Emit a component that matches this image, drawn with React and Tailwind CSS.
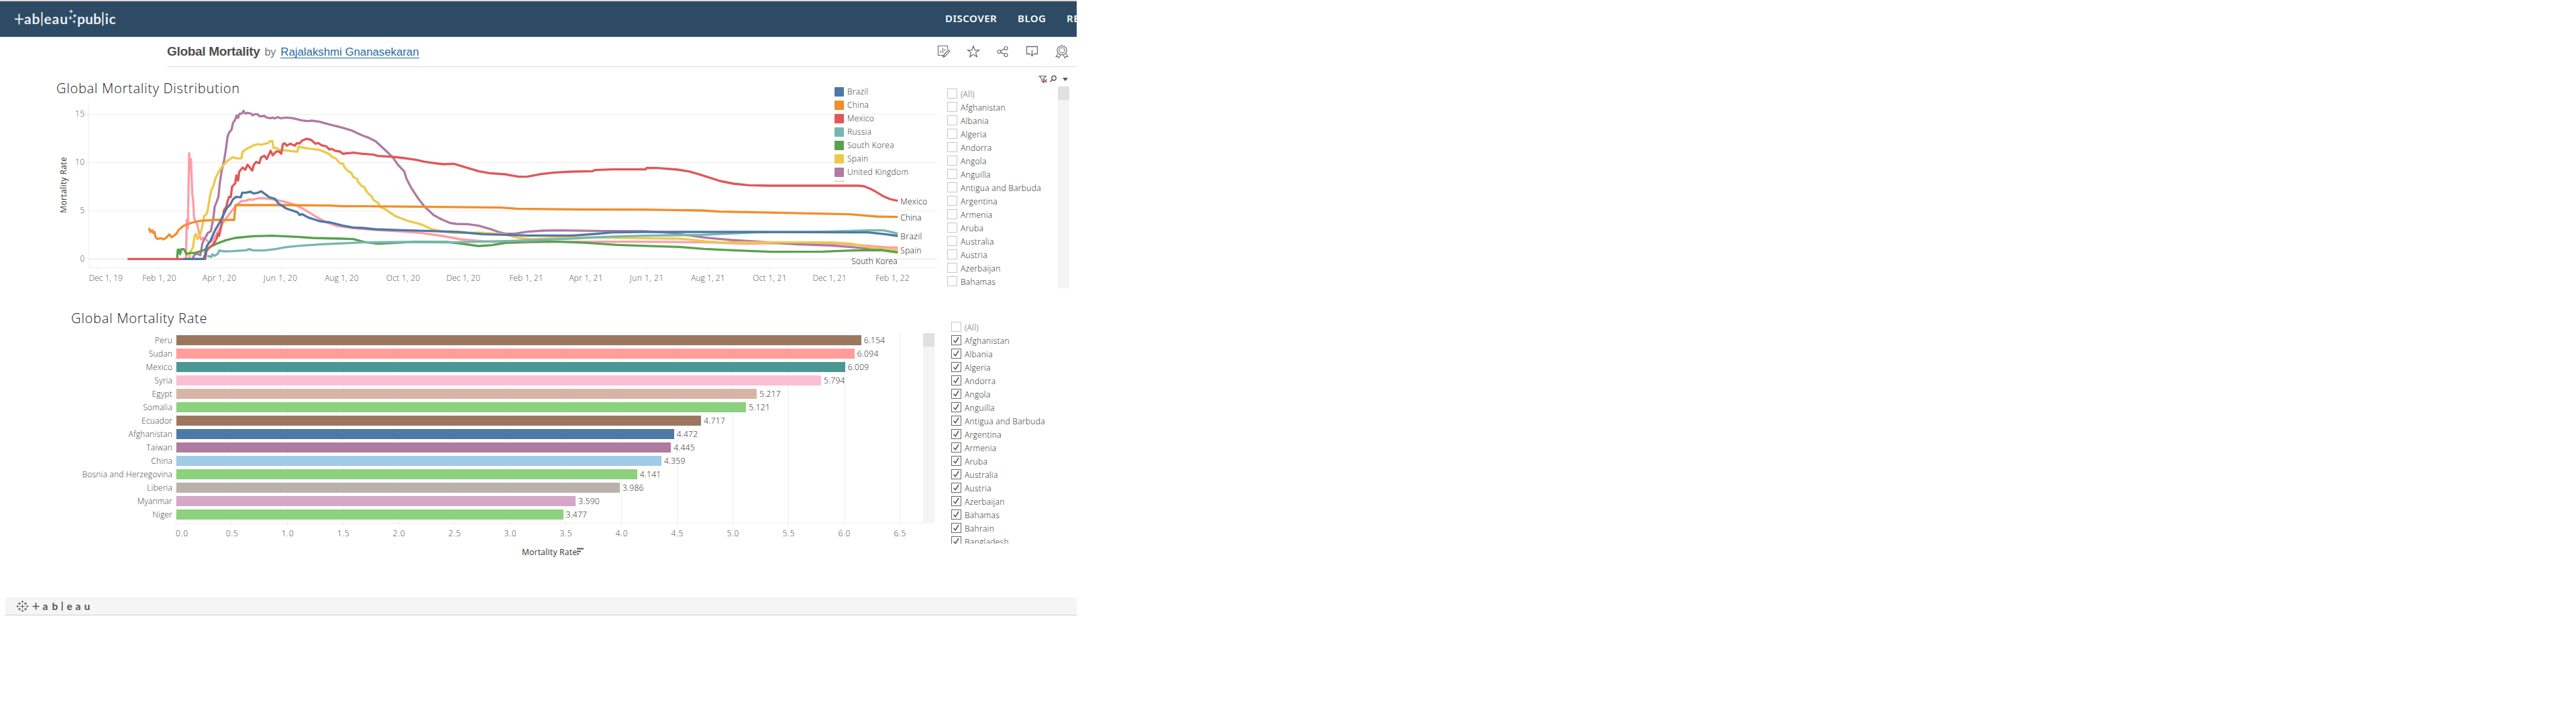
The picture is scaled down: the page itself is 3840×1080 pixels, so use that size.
import React from "react";

const SERIES = [
  { name: "Italy", color: "#ff9da7", pts: "652,859 655,684 660,722 666,385 670,455 674,412 680,570 684,600 688,675 695,690 703,708 710,742 718,772 725,765 745,775 755,785 768,780 790,745 815,700 840,665 875,620 900,600 920,598 935,592 950,594 970,588 1000,587 1040,592 1090,602 1140,617 1180,637 1230,668 1280,695 1330,712 1400,721 1500,729 1620,736 1700,742 1800,756 1880,771 1980,780 2120,786 2300,782 2700,782 2980,784 3140,790 3400,788 3600,792 3700,800 3780,807 3835,808" },
  { name: "United Kingdom", color: "#b07aa1", pts: "680,859 690,840 700,835 716,842 725,790 733,770 740,760 750,742 763,735 775,670 780,625 790,600 797,580 803,520 812,460 822,420 830,370 838,310 845,292 855,282 862,250 872,235 878,217 885,228 890,210 902,208 909,196 918,209 925,205 942,208 950,216 958,211 972,211 980,220 1003,219 1012,226 1030,229 1040,226 1048,230 1062,224 1075,229 1100,226 1130,229 1170,239 1195,242 1215,240 1250,245 1290,256 1350,271 1390,283 1440,306 1470,317 1500,332 1530,360 1560,388 1578,406 1600,438 1628,467 1638,500 1660,542 1690,588 1720,626 1760,663 1795,682 1830,697 1860,702 1910,703 1960,710 2010,724 2050,738 2080,746 2120,746 2180,737 2250,732 2330,731 2520,734 2700,735 2810,741 2890,752 2970,763 3090,774 3220,782 3380,793 3540,799 3630,806 3710,814 3780,820 3835,820" },
  { name: "Spain", color: "#edc948", pts: "665,859 672,825 683,808 690,755 697,747 703,770 712,755 720,735 727,700 733,665 743,660 750,635 757,590 765,550 775,530 785,495 795,475 810,450 825,432 840,418 860,404 885,410 900,408 905,378 930,362 955,350 975,345 985,348 1020,340 1028,331 1038,331 1043,362 1050,361 1070,370 1150,379 1155,357 1200,365 1250,371 1275,382 1290,388 1305,402 1320,408 1340,430 1355,434 1360,448 1380,468 1390,472 1400,492 1417,500 1422,515 1438,533 1450,537 1455,550 1470,570 1480,575 1490,595 1510,607 1520,625 1540,635 1570,655 1590,668 1640,687 1700,703 1750,725 1800,737 1860,743 1960,741 2080,749 2140,765 2200,770 2300,765 2400,762 2520,763 2760,767 2850,768 2910,772 2970,780 3050,785 3300,784 3540,785 3630,791 3700,805 3770,815 3835,820" },
  { name: "South Korea", color: "#59a14f", pts: "612,857 615,817 622,817 625,838 632,815 642,815 655,838 665,832 690,832 730,820 760,805 790,790 830,775 870,765 950,757 1040,755 1150,760 1220,765 1350,768 1400,770 1450,783 1510,791 1600,786 1670,782 1820,783 1880,790 1960,801 2020,797 2080,787 2200,781 2320,782 2450,787 2580,796 2760,802 2860,805 2970,814 3100,820 3270,827 3500,826 3630,821 3760,819 3835,830" },
  { name: "Russia", color: "#76b7b2", pts: "748,845 765,850 770,838 780,845 795,835 800,821 820,825 860,824 920,820 935,815 950,820 1000,821 1050,815 1100,806 1160,800 1260,793 1440,785 1620,783 1820,785 1980,781 2150,777 2400,767 2520,760 2700,755 2960,751 3200,740 3500,737 3700,731 3770,731 3810,739 3835,746" },
  { name: "Mexico", color: "#e15759", pts: "390,859 738,859 743,825 750,815 760,805 772,795 782,780 790,765 795,745 800,755 808,720 815,680 822,640 832,625 838,600 845,580 852,582 858,535 872,520 877,485 885,508 890,468 905,450 917,460 927,437 948,463 955,438 965,425 980,430 987,405 1003,397 1013,412 1030,375 1040,395 1055,378 1068,378 1078,388 1085,345 1093,341 1103,352 1118,343 1138,352 1147,341 1160,342 1170,330 1190,321 1212,326 1230,343 1243,340 1258,350 1280,355 1293,369 1303,366 1320,375 1340,378 1355,389 1372,385 1382,386 1398,383 1440,388 1490,392 1510,398 1580,402 1630,408 1680,415 1720,424 1800,435 1850,433 1900,448 1960,466 2010,475 2080,480 2140,491 2180,490 2240,479 2300,472 2380,468 2470,466 2480,461 2560,458 2708,458 2712,451 2760,452 2850,459 2900,467 2940,478 2990,494 3040,510 3100,522 3170,529 3260,531 3660,531 3685,534 3715,546 3740,560 3770,578 3800,591 3835,599" },
  { name: "China", color: "#f28e2b", pts: "486,720 492,738 500,730 505,742 511,738 516,762 525,769 540,766 550,771 562,766 577,749 588,762 610,745 618,730 640,711 680,696 715,688 780,684 867,684 873,618 1100,618 1300,620 1350,623 1440,623 1700,625 2060,629 2130,634 2400,637 2700,638 2960,642 3040,647 3300,652 3480,656 3620,659 3740,669 3835,671" },
  { name: "Brazil", color: "#4e79a7", pts: "640,859 730,859 737,840 745,800 760,780 775,745 785,725 795,708 805,690 820,660 835,630 850,615 862,592 875,581 897,583 903,562 918,563 940,558 955,566 975,562 988,556 1005,568 1025,583 1050,590 1065,610 1100,633 1150,650 1160,662 1170,658 1200,674 1250,690 1300,696 1350,709 1400,718 1440,720 1500,726 1620,730 1720,733 1870,738 1980,748 2180,754 2380,754 2480,747 2560,740 2700,738 3200,738 3700,740 3780,748 3835,756" },
];

const DATE_TICKS = [
  ["Dec 1, 19", 254, 293], ["Feb 1, 20", 532, 532], ["Apr 1, 20", 799, 801], ["Jun 1, 20", 1075, 1074],
  ["Aug 1, 20", 1348, 1348], ["Oct 1, 20", 1622, 1623], ["Dec 1, 20", 1895, 1892], ["Feb 1, 21", 2173, 2173],
  ["Apr 1, 21", 2438, 2440], ["Jun 1, 21", 2713, 2712], ["Aug 1, 21", 2986, 2986], ["Oct 1, 21", 3260, 3262],
  ["Dec 1, 21", 3533, 3530], ["Feb 1, 22", 3811, 3811],
];
const MINOR_TICKS = [391, 661, 935, 1210, 1485, 1762, 2035, 2300, 2572, 2848, 3124, 3400, 3673, 3937];

const LEGEND = [
  ["Brazil", "#4e79a7"], ["China", "#f28e2b"], ["Mexico", "#e15759"], ["Russia", "#76b7b2"],
  ["South Korea", "#59a14f"], ["Spain", "#edc948"], ["United Kingdom", "#b07aa1"],
];

const COUNTRIES = [
  "(All)", "Afghanistan", "Albania", "Algeria", "Andorra", "Angola", "Anguilla", "Antigua and Barbuda",
  "Argentina", "Armenia", "Aruba", "Australia", "Austria", "Azerbaijan", "Bahamas", "Bahrain", "Bangladesh",
];

const BARS = [
  ["Peru", "6.154", "#9d7660"], ["Sudan", "6.094", "#ff9d9a"], ["Mexico", "6.009", "#499894"],
  ["Syria", "5.794", "#fabfd2"], ["Egypt", "5.217", "#d7b5a6"], ["Somalia", "5.121", "#8cd17d"],
  ["Ecuador", "4.717", "#9d7660"], ["Afghanistan", "4.472", "#4e79a7"], ["Taiwan", "4.445", "#b07aa1"],
  ["China", "4.359", "#a0cbe8"], ["Bosnia and Herzegovina", "4.141", "#8cd17d"], ["Liberia", "3.986", "#bab0ac"],
  ["Myanmar", "3.590", "#d4a6c8"], ["Niger", "3.477", "#8cd17d"],
];
const UNIT = 165.95;

function PublicLogo() {
  return (
    <svg width="164" height="40" viewBox="10 8.5 164 40" fill="#e9edf0" stroke="none" className="ml-[10px] font-['Lato'] text-[21px] font-bold">
      <g stroke="#e9edf0" strokeWidth="2" fill="none">
        <path d="M28.5 20v16M22 28h13M62.5 17.500v20.500M153.300 17.500v20.500" />
        <path strokeWidth="1.300" d="M106 14v5M103.500 16.500h5M105 23.500v5.500M102.300 26.300h5.500M111.500 20.500v5M109 23h5M110.500 29.500v4.500M108.300 31.800h4.500" />
      </g>
      <text x="36" y="35.800" textLength="23.500">ab</text>
      <text x="65.500" y="35.800" textLength="35.500">eau</text>
      <text x="115" y="35.800" textLength="36">pub</text>
      <text x="156.500" y="35.800" textLength="16">ic</text>
    </svg>
  );
}

function ActionIcons() {
  const cls = "fill-none stroke-[#6b6b6b]";
  return (
    <div className="mr-[11px] flex gap-[22px]">
      <svg className={cls} width="22" height="22" viewBox="0 0 22 22" strokeWidth="1.200">
        <path d="M10 16.500H2.500v-14h14v5M6.500 13V9.500M9.500 13V5.500M12.500 10V7.500" />
        <path d="M10.500 16.500l7-8 2.200 2-7.200 7.800-3 1zM10.700 16.500l2 1.700" />
      </svg>
      <svg className={cls} width="22" height="22" viewBox="0 0 22 22" strokeWidth="1.200">
        <path d="M11 2.800l2.300 6h6.200l-5 3.800 1.900 6.200L11 15.300l-5.400 3.500 1.900-6.200-5-3.800h6.200z" />
      </svg>
      <svg className={cls} width="22" height="22" viewBox="0 0 22 22" strokeWidth="1.200">
        <circle cx="5.500" cy="11" r="2.500" />
        <circle cx="15.500" cy="6" r="2.500" />
        <circle cx="15.500" cy="16" r="2.500" />
        <path d="M7.700 9.900l5.500-2.700M7.700 12.100l5.500 2.700" />
      </svg>
      <svg className={cls} width="22" height="22" viewBox="0 0 22 22" strokeWidth="1.300">
        <path d="M8.500 14.500h-6v-11h16v11h-6M10.500 8.500v8" />
        <path d="M8 15.500h5l-2.500 3z" fill="#6b6b6b" stroke="none" />
      </svg>
      <svg className={cls} width="22" height="22" viewBox="0 0 22 22" strokeWidth="1.100">
        <circle cx="11" cy="9" r="4" />
        <path d="M11 2l1.700 1 2-.2.900 1.700 1.800.9v2l1 1.600-1 1.700v2l-1.800.9-.9 1.700-2-.1-1.700 1-1.700-1-2 .1-.9-1.700-1.800-.9v-2l-1-1.700 1-1.600v-2l1.800-.9.900-1.700 2 .2z" />
        <path d="M5.200 13.500l-3 5 2.800-.3 1.500 2.300 3-5.500M16.800 13.500l3 5-2.800-.3-1.500 2.300-3-5.500" />
      </svg>
    </div>
  );
}

function FilterList({ items, checked }) {
  return (
    <ul className="flex flex-col">
      {items.map((name, i) => {
        const on = checked && i > 0;
        return (
          <li key={name} className="flex h-5 items-start gap-[5px]">
            <span className={"flex size-[15px] shrink-0 items-center justify-center border bg-white " + (on ? "border-[#666]" : "border-[#c6c6c6]")}>
              {on && (
                <svg width="11" height="11" viewBox="0 0 11 11" fill="none" stroke="#555" strokeWidth="1.600">
                  <path d="M1.500 5.800l2.800 3 4.700-7.800" />
                </svg>
              )}
            </span>
            <span className={"text-[12px] leading-[17px] font-light tracking-[0.320px] whitespace-nowrap " + (i ? "text-[#1f1f1f]" : "text-[#555]")}>{name}</span>
          </li>
        );
      })}
    </ul>
  );
}

function LineChart() {
  return (
    <svg width="1350" height="340" viewBox="0 0 4050 1020" className="block text-[36px] font-light">
      <g stroke="#efefef" strokeWidth="3" fill="none">
        <path d="M217.500 158V898.500H4010M217 211.500H4010M217 427.500H4010M217 643.500H4010" />
        <path d="M205 211.500h12M205 427.500h12M205 643.500h12M205 859.500h12" />
        {DATE_TICKS.map(([label, x]) => <path key={label} d={`M${x} 898v13`} />)}
        {MINOR_TICKS.map((x) => <path key={x} d={`M${x} 898v5`} />)}
      </g>
      <path d="M222 859.500H4010" stroke="#bdbdbd" strokeWidth="3" strokeDasharray="3 3" />
      <g fill="none" strokeWidth="10" strokeLinejoin="round">
        {SERIES.map((s) => <polyline key={s.name} points={s.pts} stroke={s.color} />)}
      </g>
      <g fill="#555" textAnchor="end">
        <text x="198" y="222" textLength="42">15</text>
        <text x="198" y="438" textLength="42">10</text>
        <text x="198" y="654">5</text>
        <text x="198" y="870">0</text>
      </g>
      <g fill="#555" textAnchor="middle">
        {DATE_TICKS.map(([label, , x]) => <text key={label} x={x} y="957" textLength="151">{label}</text>)}
      </g>
      <g fill="#111">
        <text x="3847" y="615" textLength="119">Mexico</text>
        <text x="3847" y="687" textLength="93">China</text>
        <text x="3847" y="771" textLength="96">Brazil</text>
        <text x="3847" y="834" textLength="93">Spain</text>
        <text x="3628" y="882" textLength="205">South Korea</text>
      </g>
      <text transform="translate(118 653) rotate(-90)" textLength="250" fill="#333" className="font-normal">Mortality Rate</text>
    </svg>
  );
}

function BarChart() {
  return (
    <div className="relative mt-[10px] w-[1376px]">
      <div className="absolute top-0 left-[262px] h-[289px] w-[1114px]">
        <svg width="1114" height="289" stroke="#efefef" fill="none">
          {Array.from({ length: 14 }, (_, i) => {
            const x = Math.round(i * UNIT / 2) + 0.5;
            return <path key={i} d={`M${x} 0V288`} />;
          })}
          <path d="M0 283.500H1114" />
        </svg>
      </div>
      <div className="relative flex flex-col gap-[5px] pt-[3px]">
        {BARS.map(([name, value, color]) => (
          <div key={name} className="flex h-[15px] items-center">
            <span className="w-[257px] text-right text-[12px] font-light tracking-[0.200px] text-[#444]">{name}</span>
            <span className="ml-[5.500px] h-[15px]" style={{ width: value * UNIT, backgroundColor: color }} />
            <span className="ml-1 text-[12px] font-light tracking-[0.300px] text-[#222]">{value}</span>
          </div>
        ))}
      </div>
      <svg width="1376" height="60" className="mt-[4px] block text-[12px] font-light" fill="#444">
        <text x="262" y="20.500" textLength="18">0.0</text>
        {Array.from({ length: 13 }, (_, i) => (
          <text key={i} x={262.700 + (i + 1) * UNIT / 2} y="20.500" textAnchor="middle" textLength="18">{((i + 1) / 2).toFixed(1)}</text>
        ))}
        <text x="778" y="48.500" textLength="82" fill="#333" className="font-normal">Mortality Rate</text>
        <path d="M860 39.500h10M860 43.500h6M860 47.500h3" stroke="#555" strokeWidth="2" />
      </svg>
    </div>
  );
}

function FooterMark() {
  return (
    <svg width="120" height="24" viewBox="0 0 120 24" className="ml-4 block font-['Lato'] text-[15.500px] font-bold" fill="#555">
      <path
        stroke="#555"
        strokeWidth="1"
        fill="none"
        d="M9.500 9.500v6M6.500 12.500h6M9.500 3.800v3.400M7.800 5.500h3.400M9.500 17.500v3.500M7.800 19.200h3.400M.5 12.500h3.400M2.200 10.800v3.400M15.100 12.500h3.400M16.800 10.800v3.400M2.800 8.400h4.400M5 6.200v4.400M11.800 8.400h4.400M14 6.200v4.400M2.800 16.600h4.400M5 14.400v4.400M11.800 16.600h4.400M14 14.400v4.400"
      />
      <path stroke="#555" strokeWidth="1.600" d="M24.500 12.500h10M29.500 7v10.500M68.700 5.500v13.500" />
      <text x="39.500" y="17.800">a</text>
      <text x="53.500" y="17.800">b</text>
      <text x="75.500" y="17.800">e</text>
      <text x="88.500" y="17.800">a</text>
      <text x="101.500" y="17.800">u</text>
    </svg>
  );
}

export default function App() {
  return (
    <div className="w-[1605px] overflow-hidden bg-white font-['Open_Sans',sans-serif]">
      <header className="flex h-[55px] items-center justify-between border-t-2 border-[#e6d3d1] bg-[#2d4b65]">
        <PublicLogo />
        <nav className="-mr-[44px] flex gap-[31px] pb-[4px] font-['Noto_Sans',sans-serif] text-[15px] leading-5 font-semibold tracking-[0.500px] text-white">
          <a className="w-[77px] whitespace-nowrap">DISCOVER</a>
          <a className="w-[42px] whitespace-nowrap">BLOG</a>
          <a className="w-[59px] whitespace-nowrap">RE</a>
        </nav>
      </header>

      <div className="ml-[249px] flex h-[45px] items-center justify-between border-b border-[#dcdcdc]">
        <div className="flex items-baseline gap-[7px] font-['Liberation_Sans',sans-serif]">
          <h1 className="text-[19px] font-bold tracking-[-0.320px] text-[#4e4e4e]">Global Mortality</h1>
          <span className="text-[16px] text-[#777]">by</span>
          <a className="border-b border-[#1f6ba5] text-[16.800px] leading-[16px] text-[#1f6ba5]">Rajalakshmi Gnanasekaran</a>
        </div>
        <ActionIcons />
      </div>

      <section className="flex h-[350px]">
        <div className="relative w-[1412px] shrink-0">
          <h2 className="absolute top-[18px] left-[84px] text-[20px] leading-7 font-light tracking-[0.730px] text-[#222]">Global Mortality Distribution</h2>
          <div className="pl-[60px]"><LineChart /></div>
          <ul className="absolute top-[30px] left-[1244px] flex flex-col gap-[6px]">
            {LEGEND.map(([name, color]) => (
              <li key={name} className="flex h-[14px] items-center gap-[5px]">
                <span className="size-[14px] rounded-[1px]" style={{ backgroundColor: color }} />
                <span className="text-[12px] font-light tracking-[0.300px] text-[#333]">{name}</span>
              </li>
            ))}
            <li className="-mt-[1px] h-[2px] w-[14px] border-x border-b border-[#ff9da7]" />
          </ul>
        </div>
        <div className="w-[165px] shrink-0">
          <div className="flex h-[32px] items-end justify-end">
            <svg width="30" height="16" viewBox="0 0 30 16" fill="none" stroke="#555" strokeWidth="1.200" className="mb-[7px]">
              <path d="M2.500 4.500h9.500l-3.500 4.500v5l-2.500-1.800v-3.200z" />
              <path d="M9 9.500l4.500 4.500M13.500 9.500l-4.500 4.500" stroke="#c9443c" strokeWidth="1.400" />
              <circle cx="24" cy="7.500" r="3.200" strokeWidth="1.400" />
              <path d="M21.800 9.800l-3.300 3.200" strokeWidth="1.600" />
            </svg>
          </div>
          <FilterList items={COUNTRIES.slice(0, 15)} />
        </div>
        <div className="w-[17px] shrink-0">
          <div className="flex h-[29px] items-end justify-center pl-[4px]">
            <svg width="8" height="5" className="mb-2"><path d="M0 0h8l-4 5z" fill="#555" /></svg>
          </div>
          <div className="h-[301px] bg-[#f4f4f4]"><div className="h-5 bg-[#e0e0e0]" /></div>
        </div>
      </section>

      <section className="flex h-[441px]">
        <div className="w-[1376px] shrink-0 pt-[11px]">
          <h2 className="ml-[106px] h-[26px] text-[20px] leading-7 font-light tracking-[0.760px] text-[#222]">Global Mortality Rate</h2>
          <BarChart />
        </div>
        <div className="mt-[47px] h-[283px] w-[17px] shrink-0 bg-[#f4f4f4]"><div className="h-5 bg-[#e0e0e0]" /></div>
        <div className="mt-[30px] ml-[25px] h-[331px] overflow-hidden"><FilterList items={COUNTRIES} checked /></div>
      </section>

      <footer className="ml-2 flex h-[27px] items-center border-b border-[#cfcfcf] bg-[#f5f5f5]">
        <FooterMark />
      </footer>
    </div>
  );
}
